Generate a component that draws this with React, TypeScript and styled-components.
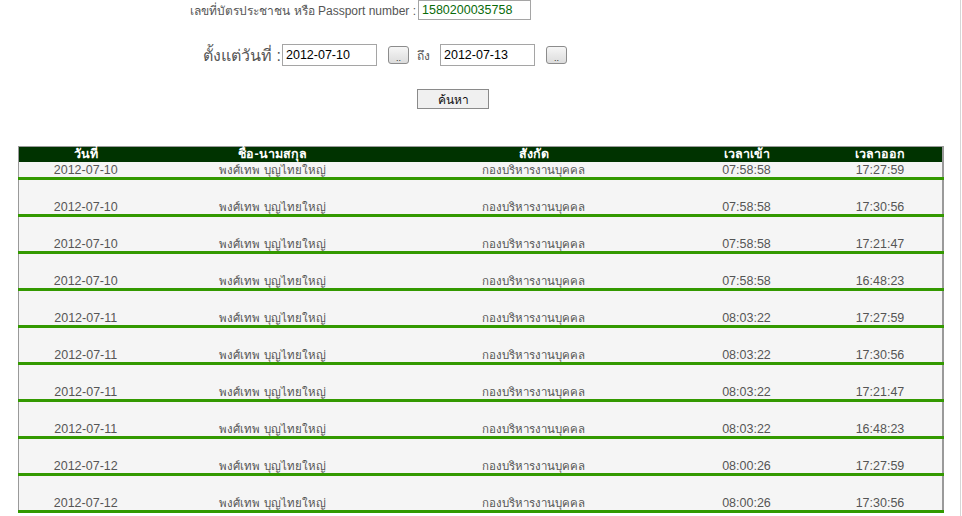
import React from "react";
import styled, { createGlobalStyle } from "styled-components";

const Global = createGlobalStyle`
  html, body { margin: 0; padding: 0; background: #fff; }
  body { font-family: "Liberation Sans", Tahoma, "Noto Sans", sans-serif; color: #555; }
`;

const Page = styled.div`
  width: 961px;
  min-height: 516px;
  border-right: 1px solid #d6d6d6;
  box-sizing: border-box;
`;

const IdRow = styled.div`
  display: flex;
  align-items: center;
  height: 20px;
  padding-left: 190px;
`;

const SmallLabel = styled.span`
  width: 228px;
  padding-right: 2px;
  box-sizing: border-box;
  text-align: right;
  font-size: 12px;
  color: #555;
  white-space: nowrap;
`;

const TextInput = styled.input<{ $w: number; $h: number; $green?: boolean }>`
  box-sizing: border-box;
  width: ${(p) => p.$w}px;
  height: ${(p) => p.$h}px;
  border: 1px solid #a5a5a5;
  padding: 0 0 0 3px;
  margin: 0;
  font-family: "Liberation Sans", Arial, sans-serif;
  font-size: 12.5px;
  color: ${(p) => (p.$green ? "#0a6b0a" : "#000")};
  background: #fff;
  outline: none;
`;

const DateRow = styled.div`
  display: flex;
  align-items: center;
  height: 22px;
  margin-top: 24px;
  padding-left: 203px;
`;

const BigLabel = styled.span`
  width: 79px;
  font-size: 16px;
  color: #555;
  white-space: nowrap;
`;

const DotButton = styled.button<{ $ml: number }>`
  box-sizing: border-box;
  width: 21px;
  height: 18px;
  margin: 0 0 0 ${(p) => p.$ml}px;
  padding: 0;
  border: 1px solid #8c8c8c;
  border-radius: 3px;
  background: linear-gradient(#f6f6f6, #dcdcdc);
  font-size: 9px;
  line-height: 22px;
  color: #333;
  font-family: "Liberation Sans", Arial, sans-serif;
`;

const ToLabel = styled.span`
  width: 31px;
  box-sizing: border-box;
  padding-left: 8px;
  font-size: 12px;
  color: #555;
  white-space: nowrap;
`;

const SearchRow = styled.div`
  display: flex;
  margin-top: 23px;
  padding-left: 417px;
`;

const SearchButton = styled.button`
  box-sizing: border-box;
  width: 72px;
  height: 20px;
  margin: 0;
  padding: 0;
  border: 1px solid #8a8a8a;
  background: #f0f0f0;
  font-family: "Liberation Sans", Tahoma, sans-serif;
  font-size: 12px;
  color: #111;
`;

const Table = styled.table`
  margin: 37px 0 0 18px;
  width: 924px;
  border-collapse: collapse;
  border: 1px solid #9a9a9a;
  border-right-width: 2px;
  background: #f5f5f5;
  table-layout: fixed;
  font-size: 12.5px;
`;

const HeadCell = styled.th`
  height: 15px;
  padding: 0;
  background: #003300;
  color: #fff;
  font-weight: bold;
  font-size: 12.5px;
  line-height: 15px;
  text-align: center;
`;

const DataRow = styled.tr`
  border-bottom: 3px solid #339900;
`;

const DataCell = styled.td<{ $thai?: boolean }>`
  height: 14px;
  padding: 1px 0 0;
  line-height: 14px;
  text-align: center;
  color: #555;
  font-size: ${(p) => (p.$thai ? "11.5px" : "12.5px")};
  white-space: nowrap;
`;

const GapCell = styled.td`
  height: 19px;
  padding: 0;
`;

const cols = [134, 240, 282, 144, 124];
const outs = ["17:27:59", "17:30:56", "17:21:47", "16:48:23"];
const rows = [
  ["2012-07-10", "07:58:58"],
  ["2012-07-10", "07:58:58"],
  ["2012-07-10", "07:58:58"],
  ["2012-07-10", "07:58:58"],
  ["2012-07-11", "08:03:22"],
  ["2012-07-11", "08:03:22"],
  ["2012-07-11", "08:03:22"],
  ["2012-07-11", "08:03:22"],
  ["2012-07-12", "08:00:26"],
  ["2012-07-12", "08:00:26"],
];

export default function App() {
  return (
    <Page>
      <Global />
      <IdRow>
        <SmallLabel>เลขที่บัตรประชาชน หรือ Passport number :</SmallLabel>
        <TextInput $w={113} $h={20} $green defaultValue="1580200035758" />
      </IdRow>
      <DateRow>
        <BigLabel>ตั้งแต่วันที่ :</BigLabel>
        <TextInput $w={95} $h={22} defaultValue="2012-07-10" />
        <DotButton $ml={11}>..</DotButton>
        <ToLabel>ถึง</ToLabel>
        <TextInput $w={95} $h={22} defaultValue="2012-07-13" />
        <DotButton $ml={11}>..</DotButton>
      </DateRow>
      <SearchRow>
        <SearchButton>ค้นหา</SearchButton>
      </SearchRow>
      <Table>
        <colgroup>
          {cols.map((w, i) => (
            <col key={i} style={{ width: w }} />
          ))}
        </colgroup>
        <thead>
          <tr>
            <HeadCell>วันที่</HeadCell>
            <HeadCell>ชื่อ-นามสกุล</HeadCell>
            <HeadCell>สังกัด</HeadCell>
            <HeadCell>เวลาเข้า</HeadCell>
            <HeadCell>เวลาออก</HeadCell>
          </tr>
        </thead>
        <tbody>
          {rows.map(([d, t], i) => (
            <React.Fragment key={i}>
              {i > 0 && (
                <tr>
                  <GapCell colSpan={5} />
                </tr>
              )}
              <DataRow>
                <DataCell>{d}</DataCell>
                <DataCell $thai>พงศ์เทพ บุญไทยใหญ่</DataCell>
                <DataCell $thai>กองบริหารงานบุคคล</DataCell>
                <DataCell>{t}</DataCell>
                <DataCell>{outs[i % 4]}</DataCell>
              </DataRow>
            </React.Fragment>
          ))}
        </tbody>
      </Table>
    </Page>
  );
}
